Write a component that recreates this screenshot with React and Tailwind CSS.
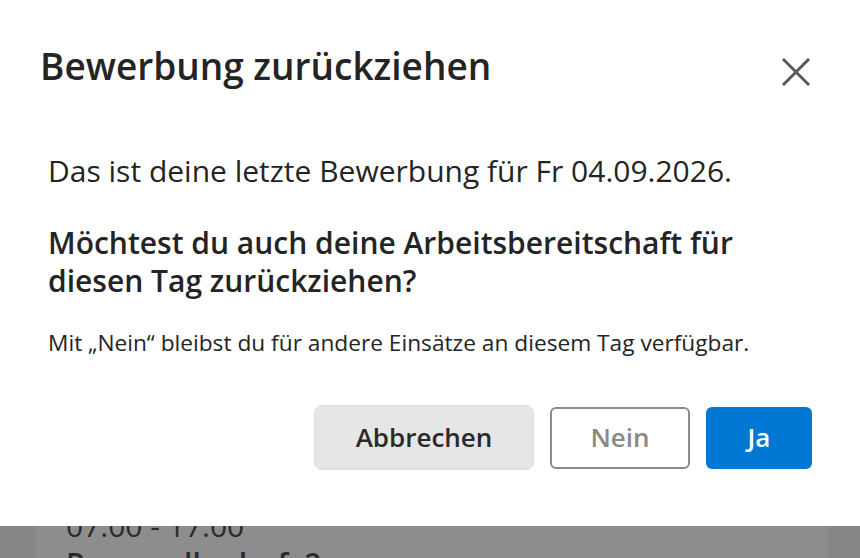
export default function App() {
  return (
    <div
      className="relative w-[860px] h-[558px] overflow-hidden bg-[#878787]"
      style={{ fontFamily: '"Open Sans", "Noto Sans", Arial, sans-serif' }}
    >
      {/* dimmed page behind the dialog */}
      <div className="absolute left-0 right-0 top-[480px] flex">
        <div className="ml-[34px] w-[794px] h-[120px] bg-[#8d8d8d] border-l border-[#828282] pl-[31px] pt-[27px] text-[#2a2a2a]">
          <div className="text-[30px] leading-[38px]">07:00 - 17:00</div>
          <div className="text-[30px] leading-[38px] font-semibold">Personalbedarf: 2</div>
        </div>
      </div>

      {/* dialog */}
      <div className="relative w-full h-[526px] bg-white text-[#242424]">
        <div className="flex items-start justify-between pl-[40px] pr-[48px] pt-[42px]">
          <h2 className="text-[37px] leading-[48px] font-semibold">Bewerbung zurückziehen</h2>
          <button className="mt-[14px] w-[32px] h-[32px] flex items-center justify-center text-[#5a5a5a]">
            <svg width="28" height="28" viewBox="0 0 28 28" fill="none" stroke="currentColor" strokeWidth="3" strokeLinecap="square">
              <path d="M2 2L26 26M26 2L2 26" />
            </svg>
          </button>
        </div>

        <div className="px-[48px] pt-[61px]">
          <p className="text-[30px] leading-[40px]">Das ist deine letzte Bewerbung für Fr 04.09.2026.</p>
          <p className="mt-[33px] max-w-[700px] text-[30px] leading-[38px] font-semibold">
            Möchtest du auch deine Arbeitsbereitschaft für diesen Tag zurückziehen?
          </p>
          <p className="mt-[28px] text-[22.7px] leading-[30px]">
            Mit „Nein“ bleibst du für andere Einsätze an diesem Tag verfügbar.
          </p>
        </div>

        <div className="flex justify-end items-center gap-[16px] px-[48px] pt-[47px]">
          <button className="w-[220px] h-[65px] rounded-[8px] bg-[#e6e6e6] border border-[#dcdcdc] text-[26px] font-semibold text-[#2a2a2a]">
            Abbrechen
          </button>
          <button className="w-[140px] h-[62px] rounded-[6px] bg-white border-2 border-[#8a8a8a] text-[26px] font-semibold text-[#8a8a8a]">
            Nein
          </button>
          <button className="w-[106px] h-[62px] rounded-[6px] bg-[#0078d4] text-[26px] font-semibold text-white">
            Ja
          </button>
        </div>
      </div>
    </div>
  );
}
